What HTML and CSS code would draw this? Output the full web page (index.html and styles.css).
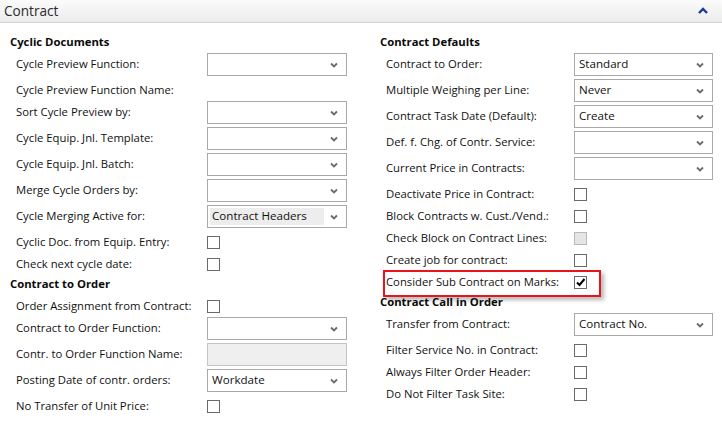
FILE: index.html
```html
<!DOCTYPE html>
<html>
<head>
<meta charset="utf-8">
<link rel="stylesheet" href="styles.css">
</head>
<body>
<div class="header">
  <span class="title">Contract</span>
  <svg class="collapse" width="10" height="7" viewBox="0 0 10 7"><path d="M1 6 L5 2 L9 6" fill="none" stroke="#1b3a97" stroke-width="2.4"/></svg>
</div>
<div class="columns">
  <div class="col col-left">
    <div class="group">Cyclic Documents</div>
    <div class="row sel"><span class="label">Cycle Preview Function:</span><div class="field select"><span class="val"></span><svg class="arr" width="8" height="6" viewBox="0 0 8 6"><path d="M1 1.5 L4 4.5 L7 1.5" fill="none" stroke="#6b6b6b" stroke-width="1.8"/></svg></div></div>
    <div class="row txt"><span class="label wide">Cycle Preview Function Name:</span></div>
    <div class="row sel"><span class="label">Sort Cycle Preview by:</span><div class="field select"><span class="val"></span><svg class="arr" width="8" height="6" viewBox="0 0 8 6"><path d="M1 1.5 L4 4.5 L7 1.5" fill="none" stroke="#6b6b6b" stroke-width="1.8"/></svg></div></div>
    <div class="row sel"><span class="label">Cycle Equip. Jnl. Template:</span><div class="field select"><span class="val"></span><svg class="arr" width="8" height="6" viewBox="0 0 8 6"><path d="M1 1.5 L4 4.5 L7 1.5" fill="none" stroke="#6b6b6b" stroke-width="1.8"/></svg></div></div>
    <div class="row sel"><span class="label">Cycle Equip. Jnl. Batch:</span><div class="field select"><span class="val"></span><svg class="arr" width="8" height="6" viewBox="0 0 8 6"><path d="M1 1.5 L4 4.5 L7 1.5" fill="none" stroke="#6b6b6b" stroke-width="1.8"/></svg></div></div>
    <div class="row sel"><span class="label">Merge Cycle Orders by:</span><div class="field select"><span class="val"></span><svg class="arr" width="8" height="6" viewBox="0 0 8 6"><path d="M1 1.5 L4 4.5 L7 1.5" fill="none" stroke="#6b6b6b" stroke-width="1.8"/></svg></div></div>
    <div class="row sel"><span class="label">Cycle Merging Active for:</span><div class="field select"><span class="val shaded">Contract Headers</span><svg class="arr" width="8" height="6" viewBox="0 0 8 6"><path d="M1 1.5 L4 4.5 L7 1.5" fill="none" stroke="#6b6b6b" stroke-width="1.8"/></svg></div></div>
    <div class="row chk"><span class="label">Cyclic Doc. from Equip. Entry:</span><span class="box"></span></div>
    <div class="row chk"><span class="label">Check next cycle date:</span><span class="box"></span></div>
    <div class="group">Contract to Order</div>
    <div class="row chk"><span class="label">Order Assignment from Contract:</span><span class="box"></span></div>
    <div class="row sel"><span class="label">Contract to Order Function:</span><div class="field select"><span class="val"></span><svg class="arr" width="8" height="6" viewBox="0 0 8 6"><path d="M1 1.5 L4 4.5 L7 1.5" fill="none" stroke="#6b6b6b" stroke-width="1.8"/></svg></div></div>
    <div class="row sel"><span class="label">Contr. to Order Function Name:</span><div class="field disabled"></div></div>
    <div class="row sel"><span class="label">Posting Date of contr. orders:</span><div class="field select"><span class="val">Workdate</span><svg class="arr" width="8" height="6" viewBox="0 0 8 6"><path d="M1 1.5 L4 4.5 L7 1.5" fill="none" stroke="#6b6b6b" stroke-width="1.8"/></svg></div></div>
    <div class="row chk"><span class="label">No Transfer of Unit Price:</span><span class="box"></span></div>
  </div>
  <div class="col col-right">
    <div class="group">Contract Defaults</div>
    <div class="row sel"><span class="label">Contract to Order:</span><div class="field select"><span class="val">Standard</span><svg class="arr" width="8" height="6" viewBox="0 0 8 6"><path d="M1 1.5 L4 4.5 L7 1.5" fill="none" stroke="#6b6b6b" stroke-width="1.8"/></svg></div></div>
    <div class="row sel"><span class="label">Multiple Weighing per Line:</span><div class="field select"><span class="val">Never</span><svg class="arr" width="8" height="6" viewBox="0 0 8 6"><path d="M1 1.5 L4 4.5 L7 1.5" fill="none" stroke="#6b6b6b" stroke-width="1.8"/></svg></div></div>
    <div class="row sel"><span class="label">Contract Task Date (Default):</span><div class="field select"><span class="val">Create</span><svg class="arr" width="8" height="6" viewBox="0 0 8 6"><path d="M1 1.5 L4 4.5 L7 1.5" fill="none" stroke="#6b6b6b" stroke-width="1.8"/></svg></div></div>
    <div class="row sel"><span class="label">Def. f. Chg. of Contr. Service:</span><div class="field select"><span class="val"></span><svg class="arr" width="8" height="6" viewBox="0 0 8 6"><path d="M1 1.5 L4 4.5 L7 1.5" fill="none" stroke="#6b6b6b" stroke-width="1.8"/></svg></div></div>
    <div class="row sel"><span class="label">Current Price in Contracts:</span><div class="field select"><span class="val"></span><svg class="arr" width="8" height="6" viewBox="0 0 8 6"><path d="M1 1.5 L4 4.5 L7 1.5" fill="none" stroke="#6b6b6b" stroke-width="1.8"/></svg></div></div>
    <div class="row chk"><span class="label">Deactivate Price in Contract:</span><span class="box"></span></div>
    <div class="row chk"><span class="label">Block Contracts w. Cust./Vend.:</span><span class="box"></span></div>
    <div class="row chk"><span class="label">Check Block on Contract Lines:</span><span class="box box-disabled"></span></div>
    <div class="row chk"><span class="label">Create job for contract:</span><span class="box"></span></div>
    <div class="row chk marked"><span class="label">Consider Sub Contract on Marks:</span><span class="box"><svg width="11" height="11" viewBox="0 0 11 11"><path d="M2 5.5 L4.5 8 L9.5 2" fill="none" stroke="#000" stroke-width="2"/></svg></span></div>
    <div class="group">Contract Call in Order</div>
    <div class="row sel"><span class="label">Transfer from Contract:</span><div class="field select"><span class="val">Contract No.</span><svg class="arr" width="8" height="6" viewBox="0 0 8 6"><path d="M1 1.5 L4 4.5 L7 1.5" fill="none" stroke="#6b6b6b" stroke-width="1.8"/></svg></div></div>
    <div class="row chk"><span class="label">Filter Service No. in Contract:</span><span class="box"></span></div>
    <div class="row chk"><span class="label">Always Filter Order Header:</span><span class="box"></span></div>
    <div class="row chk"><span class="label">Do Not Filter Task Site:</span><span class="box"></span></div>
  </div>
</div>
</body>
</html>
```

FILE: styles.css
```css
* { box-sizing: border-box; }
html, body { margin: 0; padding: 0; background: #fff; }
body {
  font-family: "Open Sans", "Noto Sans", sans-serif;
  font-size: 11.3px;
  color: #111;
  width: 722px;
  height: 426px;
  overflow: hidden;
}
.header {
  height: 23px;
  border-bottom: 1px solid #d2d2d2;
  background: linear-gradient(#fbfbfb, #ececec);
  display: flex;
  align-items: center;
  justify-content: space-between;
  padding: 0 14px 0 4px;
}
.title {
  font-size: 13.6px;
  color: #2a2a2a;
  line-height: 20px;
}
.collapse { margin-top: -2px; }
.columns {
  display: grid;
  grid-template-columns: 337px 333px;
  column-gap: 33px;
  padding: 10px 0 0 10px;
}
.col { display: flex; flex-direction: column; }
.group {
  height: 20px;
  line-height: 18px;
  font-weight: bold;
  color: #0a0a0a;
}
.row {
  display: flex;
  padding-left: 6px;
  position: relative;
}
.col-left .label { width: 191px; }
.col-right .label { width: 188px; }
.label { white-space: nowrap; flex: none; }
.label.wide { width: auto; }
.row.sel { height: 26px; align-items: flex-start; }
.row.sel .label { line-height: 21px; }
.row.txt { height: 22px; align-items: center; }
.row.txt .label, .row.chk .label { padding-bottom: 2px; }
.row.chk { height: 22px; align-items: center; }
.field {
  width: 140px;
  height: 23px;
  border: 1px solid #a9a9a9;
  background: #fff;
  display: flex;
  align-items: center;
  padding: 2px 8px 2px 2px;
}
.col-right .field { width: 139px; }
.field.disabled {
  background: #efefef;
  border-color: #c4c4c4;
}
.val {
  flex: 1;
  height: 17px;
  line-height: 16px;
  padding-left: 2px;
  white-space: nowrap;
  font-size: 11.6px;
}
.val.shaded {
  background: #ededed;
  margin-right: 4px;
}
.arr { flex: none; margin-left: 2px; }
.box {
  width: 13px;
  height: 13px;
  border: 1px solid #6a6a6a;
  background: #fff;
  display: flex;
  align-items: center;
  justify-content: center;
  flex: none;
}
.box-disabled {
  border-color: #b9b9b9;
  background: #e5e5e5;
}
.marked::after {
  content: "";
  position: absolute;
  left: 3px;
  top: -1px;
  width: 214px;
  height: 23px;
  border: 2px solid #e8141c;
  box-shadow: 3px 3px 4px rgba(0, 0, 0, 0.28);
  pointer-events: none;
}
```
